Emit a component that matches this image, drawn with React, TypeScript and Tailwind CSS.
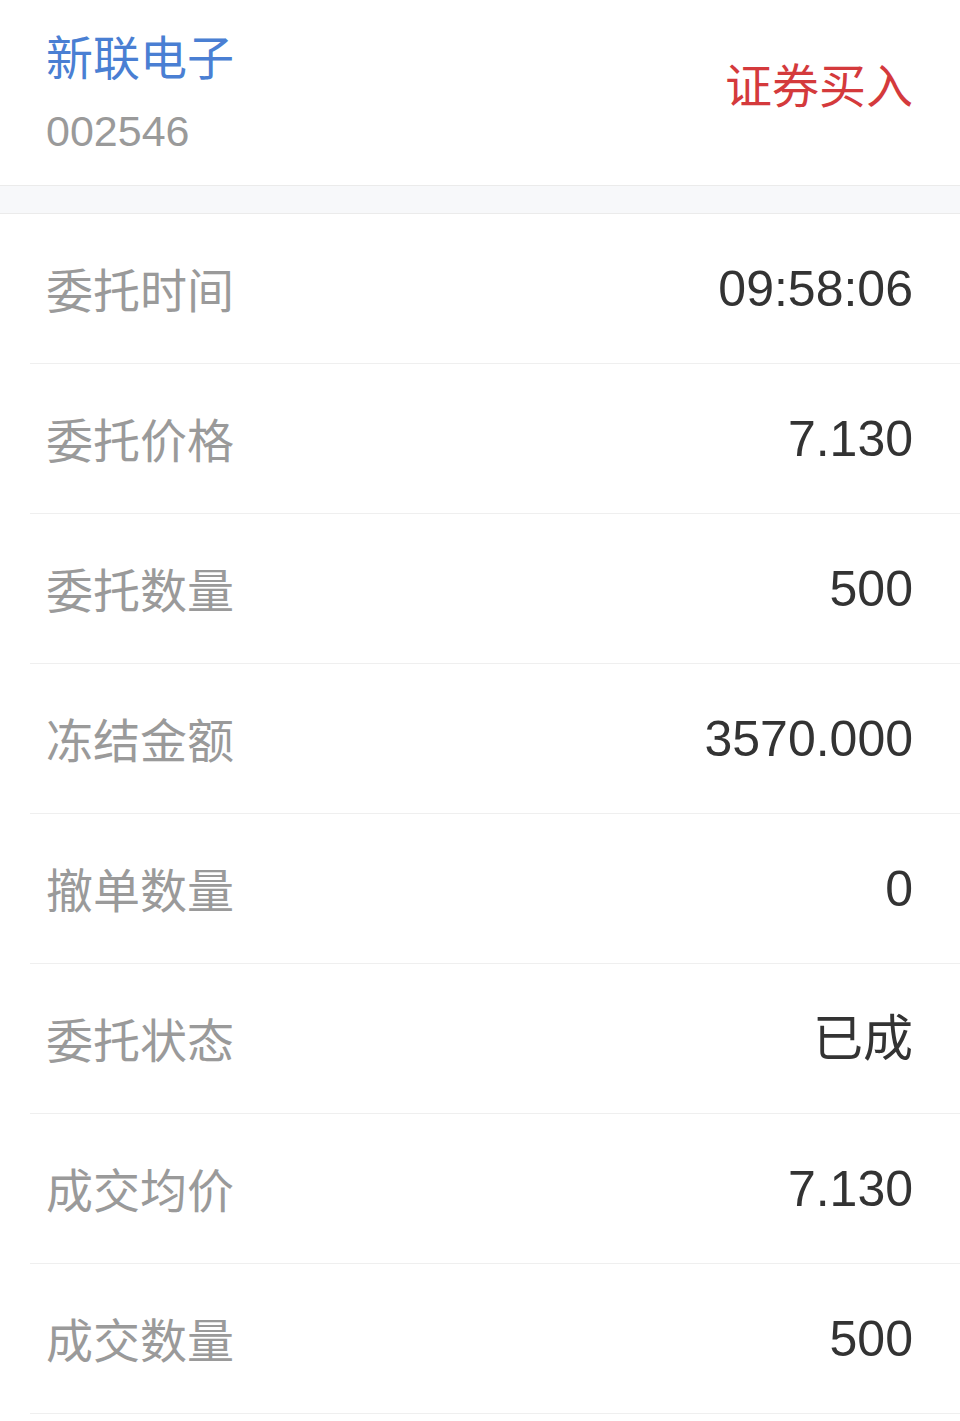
const rows: { label: string; value: string }[] = [
  { label: '委托时间', value: '09:58:06' },
  { label: '委托价格', value: '7.130' },
  { label: '委托数量', value: '500' },
  { label: '冻结金额', value: '3570.000' },
  { label: '撤单数量', value: '0' },
  { label: '委托状态', value: '已成' },
  { label: '成交均价', value: '7.130' },
  { label: '成交数量', value: '500' },
];

const font = "font-['Liberation_Sans','Noto_Sans_CJK_SC',sans-serif]";

export default function App() {
  return (
    <div className={`min-h-[1421px] w-[960px] bg-white ${font}`}>
      {/* Header */}
      <div className="flex h-[185px] items-center justify-between pl-[46px] pr-[47px]">
        <div className="flex flex-col gap-[26px] pb-[2px]">
          <div className="text-[47px] leading-[52px] text-[#4a7fd3] font-['Noto_Sans_CJK_SC',sans-serif]">
            新联电子
          </div>
          <div className="text-[43px] leading-[48px] text-[#9a9a9a]">002546</div>
        </div>
        <div className="pb-[19px] text-[47px] leading-[52px] text-[#d43a3c] font-['Noto_Sans_CJK_SC',sans-serif]">
          证券买入
        </div>
      </div>

      <div className="h-[29px] border-y border-[#ebebeb] bg-[#f7f8fa]" />

      {/* Detail rows */}
      <div>
        {rows.map((row) => (
          <div key={row.label} className="ml-[30px] flex h-[150px] items-center justify-between border-b border-[#efefef] pl-[16px] pr-[47px]">
            <span className="text-[47px] text-[#9a9a9a] font-['Noto_Sans_CJK_SC',sans-serif]">{row.label}</span>
            <span className="pt-[2px] text-[50px] text-[#333333]">{row.value}</span>
          </div>
        ))}
      </div>
    </div>
  );
}
